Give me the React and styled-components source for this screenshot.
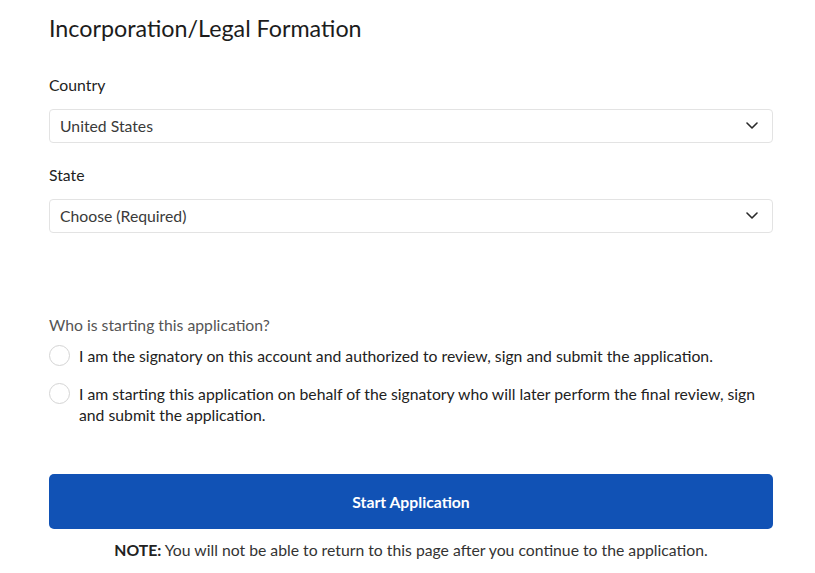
import React, { useState } from 'react';
import styled, { createGlobalStyle } from 'styled-components';

const GlobalStyle = createGlobalStyle`
  body {
    margin: 0;
    background: #ffffff;
    font-family: "Lato", "Open Sans", Arial, sans-serif;
    color: #222222;
  }
`;

const Page = styled.div`
  width: 724px;
  padding: 14px 0 0 49px;
`;

const Title = styled.h1`
  margin: 0;
  font-size: 23.3px;
  line-height: 28px;
  font-weight: 400;
  color: #1c1c1c;
`;

const Field = styled.div`
  margin-top: ${props => props.gap}px;
`;

const Label = styled.div`
  font-size: 15.75px;
  line-height: 20px;
  color: #222222;
  margin-bottom: 14px;
`;

const SelectBox = styled.div`
  height: 34px;
  box-sizing: border-box;
  border: 1px solid #e3e3e3;
  border-radius: 4px;
  display: flex;
  align-items: center;
  justify-content: space-between;
  padding: 0 14px 1px 10px;
  font-size: 15.75px;
  color: #3a3a3a;
`;

const Chevron = () => (
  <svg width="12" height="7" viewBox="0 0 12 7" fill="none">
    <path d="M1 1l5 5 5-5" stroke="#2a2a2a" strokeWidth="1.6" strokeLinecap="round" strokeLinejoin="round" />
  </svg>
);

const Question = styled.div`
  margin-top: 82px;
  font-size: 15.75px;
  line-height: 20px;
  color: #555555;
`;

const RadioList = styled.div`
  margin-top: 10px;
  display: flex;
  flex-direction: column;
  gap: 17px;
`;

const RadioRow = styled.label`
  display: flex;
  align-items: flex-start;
  gap: 9px;
  font-size: 15.75px;
  line-height: 21px;
  color: #222222;
  cursor: pointer;
`;

const Circle = styled.span`
  flex: 0 0 auto;
  width: 21px;
  height: 21px;
  box-sizing: border-box;
  border-radius: 50%;
  border: 1px solid ${props => (props.checked ? '#1152b5' : '#d4d4d4')};
  display: flex;
  align-items: center;
  justify-content: center;

  &::after {
    content: '';
    width: 11px;
    height: 11px;
    border-radius: 50%;
    background: ${props => (props.checked ? '#1152b5' : 'transparent')};
  }
`;

const Button = styled.button`
  display: block;
  width: 100%;
  height: 55px;
  margin-top: 49px;
  border: none;
  border-radius: 5px;
  background: #1152b5;
  color: #ffffff;
  font-family: inherit;
  font-size: 15.75px;
  font-weight: 700;
  padding: 0 0 1px;
  cursor: pointer;
`;

const Note = styled.p`
  margin: 11px 0 0;
  text-align: center;
  font-size: 15.75px;
  line-height: 20px;
  color: #333333;

  strong {
    font-weight: 700;
    color: #222222;
  }
`;

const options = [
  'I am the signatory on this account and authorized to review, sign and submit the application.',
  'I am starting this application on behalf of the signatory who will later perform the final review, sign and submit the application.',
];

export default function App() {
  const [choice, setChoice] = useState(null);

  return (
    <>
      <GlobalStyle />
      <Page>
        <Title>Incorporation/Legal Formation</Title>

        <Field gap={33}>
          <Label>Country</Label>
          <SelectBox>
            United States
            <Chevron />
          </SelectBox>
        </Field>

        <Field gap={22}>
          <Label>State</Label>
          <SelectBox>
            Choose (Required)
            <Chevron />
          </SelectBox>
        </Field>

        <Question>Who is starting this application?</Question>
        <RadioList>
          {options.map((text, i) => (
            <RadioRow key={i} onClick={() => setChoice(i)}>
              <Circle checked={choice === i} />
              <span>{text}</span>
            </RadioRow>
          ))}
        </RadioList>

        <Button>Start Application</Button>
        <Note>
          <strong>NOTE:</strong> You will not be able to return to this page after you continue to the application.
        </Note>
      </Page>
    </>
  );
}
